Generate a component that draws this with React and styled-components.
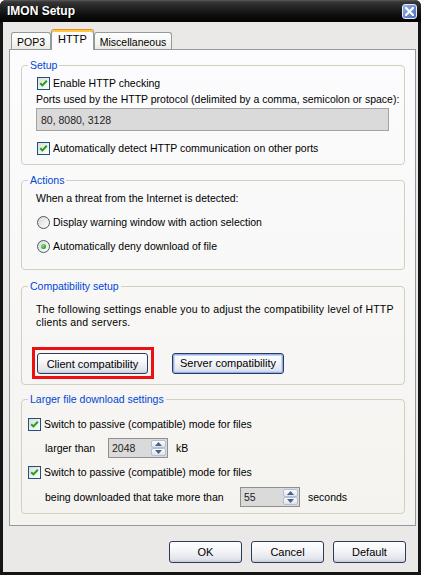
import React from 'react';
import styled, { createGlobalStyle } from 'styled-components';

const GlobalStyle = createGlobalStyle`
  html, body {
    margin: 0;
    padding: 0;
    background: #ffffff;
  }

  body {
    font-family: "Liberation Sans", Arial, sans-serif;
    font-size: 10.5px;
    color: #000;
  }

  * {
    box-sizing: border-box;
  }
`;

const CheckBox = ({ checked }) => (
  <Box>
    {checked && (
      <svg width="11" height="11" viewBox="0 0 11 11">
        <path d="M2.2 5.2 L4.4 7.4 L8.8 2.8" fill="none" stroke="#21a121" strokeWidth="2" />
      </svg>
    )}
  </Box>
);

const Radio = ({ checked }) => (
  <RadioCircle>
    {checked && <RadioDot />}
  </RadioCircle>
);

const Arrow = ({ up }) => (
  <svg width="7" height="4" viewBox="0 0 7 4">
    <path d={up ? 'M0 4 L3.5 0 L7 4 Z' : 'M0 0 L3.5 4 L7 0 Z'} fill="#4d6185" />
  </svg>
);

const SpinBox = ({ value }) => (
  <Spin>
    <SpinValue>{value}</SpinValue>
    <SpinButtons>
      <SpinButton><Arrow up /></SpinButton>
      <SpinButton><Arrow /></SpinButton>
    </SpinButtons>
  </Spin>
);

const App = () => (
  <>
    <GlobalStyle />
    <Window>
      <TitleBar>
        <Title>IMON Setup</Title>
        <CloseButton>
          <svg width="9" height="9" viewBox="0 0 9 9">
            <path d="M1 1 L8 8 M8 1 L1 8" stroke="#fff" strokeWidth="2.2" strokeLinecap="square" />
          </svg>
        </CloseButton>
      </TitleBar>

      <Body>
        <TabStrip>
          <Tab>POP3</Tab>
          <Tab $active>HTTP</Tab>
          <Tab>Miscellaneous</Tab>
        </TabStrip>

        <Panel>
          <Group $pt={4} $pb={9}>
            <Legend>Setup</Legend>
            <Content $indent={8}>
              <CheckRow $inset={1}>
                <CheckBox checked />
                Enable HTTP checking
              </CheckRow>
              <Text $mt={3}>
                Ports used by the HTTP protocol (delimited by a comma, semicolon or space):
              </Text>
              <Field $mt={2}>80, 8080, 3128</Field>
              <CheckRow $inset={1} $mt={10}>
                <CheckBox checked />
                Automatically detect HTTP communication on other ports
              </CheckRow>
            </Content>
          </Group>

          <Group $gap={9} $pt={5} $pb={16}>
            <Legend>Actions</Legend>
            <Content $indent={8}>
              <Text>When a threat from the Internet is detected:</Text>
              <CheckRow $inset={1} $mt={10}>
                <Radio />
                Display warning window with action selection
              </CheckRow>
              <CheckRow $inset={1} $mt={10}>
                <Radio checked />
                Automatically deny download of file
              </CheckRow>
            </Content>
          </Group>

          <Group $gap={10} $pt={10} $pb={5}>
            <Legend>Compatibility setup</Legend>
            <Content $indent={8}>
              <Text $wide>
                The following settings enable you to adjust the compatibility level of HTTP
                <br />
                clients and servers.
              </Text>
              <ButtonRow>
                <Highlight>
                  <Button $w={111}>Client compatibility</Button>
                </Highlight>
                <Button $w={112} $focused>Server compatibility</Button>
              </ButtonRow>
            </Content>
          </Group>

          <Group $gap={8} $pt={11} $pb={6}>
            <Legend>Larger file download settings</Legend>
            <Content>
              <CheckRow>
                <CheckBox checked />
                Switch to passive (compatible) mode for files
              </CheckRow>
              <SpinRow $mt={7}>
                <SpinLabel $w={63}>larger than</SpinLabel>
                <SpinBox value="2048" />
                <Unit>kB</Unit>
              </SpinRow>
              <CheckRow $mt={7}>
                <CheckBox checked />
                Switch to passive (compatible) mode for files
              </CheckRow>
              <SpinRow $mt={8}>
                <SpinLabel $w={195}>being downloaded that take more than</SpinLabel>
                <SpinBox value="55" />
                <Unit>seconds</Unit>
              </SpinRow>
            </Content>
          </Group>
        </Panel>

        <DialogButtons>
          <Button $w={73} $h={22}>OK</Button>
          <Button $w={73} $h={22}>Cancel</Button>
          <Button $w={73} $h={22}>Default</Button>
        </DialogButtons>
      </Body>
    </Window>
  </>
);

const Window = styled.div`
  display: flex;
  flex-direction: column;

  width: 421px;
  height: 575px;
  background: #151515;
  border-radius: 6px 6px 0 0;
  overflow: hidden;
`;

const TitleBar = styled.div`
  display: flex;
  align-items: center;
  justify-content: space-between;

  flex: none;
  height: 22px;
  padding: 0 4px 0 7px;
  background: linear-gradient(#5c5c5c 0px, #363636 2px, #222 8px, #0e0e0e 15px, #030303 22px);
`;

const Title = styled.span`
  color: #fff;
  font-weight: bold;
  font-size: 12px;
  text-shadow: 1px 1px 0 #000;
`;

const CloseButton = styled.span`
  display: flex;
  align-items: center;
  justify-content: center;

  width: 15px;
  height: 15px;
  border: 1px solid #e6ecf8;
  border-radius: 3px;
  background: linear-gradient(135deg, #9bb3e6 0%, #6c8ad0 55%, #4f6fbf 100%);
`;

const Body = styled.div`
  display: flex;
  flex-direction: column;

  flex: 1;
  margin: 0 3px 3px;
  padding: 7px 2px 0 6px;
  background: #ebe9e7;
`;

const TabStrip = styled.div`
  display: flex;
  align-items: flex-end;

  height: 20px;
  padding-left: 2px;
`;

const Tab = styled.div`
  display: flex;
  align-items: center;

  position: relative;
  z-index: ${({ $active }) => ($active ? 1 : 0)};
  height: ${({ $active }) => ($active ? 21 : 17)}px;
  margin-bottom: ${({ $active }) => ($active ? -1 : 0)}px;
  padding: ${({ $active }) => ($active ? '0 6px 3px' : '1px 5px 0')};
  border: 1px solid #919b9c;
  border-bottom: none;
  border-top-color: ${({ $active }) => ($active ? '#e68b2c' : '#919b9c')};
  border-radius: 3px 3px 0 0;
  background: ${({ $active }) => ($active
    ? '#fcfcfe'
    : 'linear-gradient(#ffffff, #f3f3ef 70%, #e9e8e2)')};
  box-shadow: ${({ $active }) => ($active ? 'inset 0 2px 0 #ffc73c' : 'none')};
  font-size: ${({ $active }) => ($active ? 11 : 10.5)}px;
`;

const Panel = styled.div`
  display: flex;
  flex-direction: column;

  height: 477px;
  padding: 9px 10px 0 11px;
  border: 1px solid #919b9c;
  background: linear-gradient(#fcfcfe, #f4f3ef);
`;

const Group = styled.fieldset`
  min-width: 0;
  margin: ${({ $gap }) => $gap || 0}px 0 0;
  padding: ${({ $pt }) => $pt}px 10px ${({ $pb }) => $pb}px 6px;
  border: 1px solid #d0d0bf;
  border-radius: 4px;
`;

const Legend = styled.legend`
  padding: 0 2px;
  line-height: 13px;
  color: #0046d5;
`;

const Content = styled.div`
  display: flex;
  flex-direction: column;

  padding-left: ${({ $indent }) => $indent || 0}px;
`;

const Text = styled.div`
  margin-top: ${({ $mt }) => $mt || 0}px;
  line-height: 13px;
  letter-spacing: ${({ $wide }) => ($wide ? '0.2px' : 'normal')};
  white-space: nowrap;
`;

const CheckRow = styled.label`
  display: flex;
  align-items: center;
  gap: 3px;

  height: 14px;
  margin-top: ${({ $mt }) => $mt || 0}px;
  padding-left: ${({ $inset }) => $inset || 0}px;
  white-space: nowrap;
`;

const Box = styled.span`
  display: flex;
  align-items: center;
  justify-content: center;

  flex: none;
  width: 13px;
  height: 13px;
  border: 1px solid #1c5180;
  background: linear-gradient(135deg, #dcdcd7, #ffffff);
`;

const RadioCircle = styled.span`
  display: flex;
  align-items: center;
  justify-content: center;

  flex: none;
  width: 13px;
  height: 13px;
  border: 1px solid #47586b;
  border-radius: 50%;
  background: linear-gradient(135deg, #d8d8d4, #ffffff);
`;

const RadioDot = styled.span`
  width: 5px;
  height: 5px;
  border-radius: 50%;
  background: radial-gradient(circle at 35% 35%, #8ee08e, #21a121 70%);
`;

const Field = styled.div`
  display: flex;
  align-items: center;

  width: 353px;
  height: 23px;
  margin-top: ${({ $mt }) => $mt || 0}px;
  padding-left: 4px;
  border: 1px solid #a3a3a3;
  background: #dadada;
  color: #222;
`;

const ButtonRow = styled.div`
  display: flex;
  align-items: center;
  gap: 18px;

  margin-top: 18px;
  margin-left: -4px;
`;

const Highlight = styled.div`
  padding: 3px 3px 2px 2px;
  border: 3px solid #ee1010;
`;

const Button = styled.button`
  width: ${({ $w }) => $w}px;
  height: ${({ $h }) => $h || 21}px;
  padding: 0;
  border: 1px solid #2e3b58;
  border-radius: 3px;
  background: linear-gradient(#ffffff 0%, #f4f5f8 45%, #e1e4ec 85%, #c8ccd7 100%);
  box-shadow: ${({ $focused }) => ($focused
    ? 'inset 0 0 0 1px #8fb0ee, inset 0 0 0 2px #c4d5f7'
    : 'none')};
  font: inherit;
  font-size: 11px;
  color: #000;
`;

const SpinRow = styled.div`
  display: flex;
  align-items: center;

  height: 20px;
  margin-top: ${({ $mt }) => $mt || 0}px;
  padding-left: 17px;
  white-space: nowrap;
`;

const SpinLabel = styled.span`
  width: ${({ $w }) => $w}px;
`;

const Spin = styled.div`
  display: flex;
  align-items: stretch;

  width: 60px;
  height: 20px;
  padding: 1px;
  border: 1px solid #8f8f8f;
  background: #dadada;
`;

const SpinValue = styled.span`
  display: flex;
  align-items: center;

  flex: 1;
  padding-left: 2px;
  color: #222;
`;

const SpinButtons = styled.div`
  display: flex;
  flex-direction: column;

  width: 15px;
`;

const SpinButton = styled.span`
  display: flex;
  align-items: center;
  justify-content: center;

  flex: 1;
  border: 1px solid #b5bfd2;
  border-radius: 2px;
  background: linear-gradient(#fdfdfe, #dce2ec);
`;

const Unit = styled.span`
  margin-left: 8px;
`;

const DialogButtons = styled.div`
  display: flex;
  justify-content: flex-end;
  gap: 9px;

  margin-top: 15px;
  padding-right: 10px;
`;

export default App;
